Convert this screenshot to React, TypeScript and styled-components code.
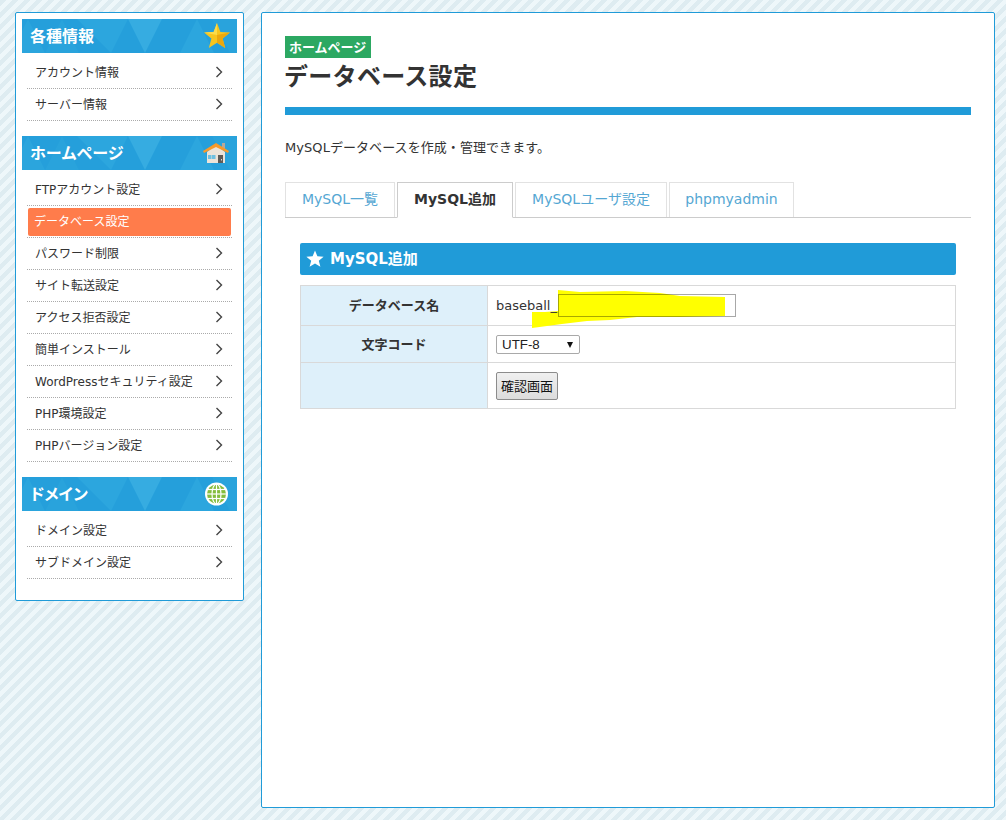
import React, { FC } from 'react'
import styled, { createGlobalStyle } from 'styled-components'

const fontStack = `"DejaVu Sans", "Noto Sans CJK JP", sans-serif`

const GlobalStyle = createGlobalStyle`
  html, body {
    margin : 0;
    padding : 0;
  }
  body {
    height : 820px;
    overflow : hidden;
    font-family : ${fontStack};
    color : #333;
    background : repeating-linear-gradient(
      135deg,
      #deecf1 0,
      #deecf1 4.25px,
      #eef7fa 4.25px,
      #eef7fa 8.5px
    );
  }
  * { box-sizing : border-box; }
`

const Page = styled.div`
  display : flex;
  align-items : flex-start;
  gap : 17px;
  padding : 12px 11px 0 15px;
  width : 1006px;
`

const Sidebar = styled.aside`
  width : 229px;
  height : 589px;
  flex : none;
  background : #fff;
  border : 1px solid #209bd8;
  border-radius : 2px;
  padding : 6px 6px 0;
`

const Group = styled.section`
  margin-bottom : 15px;
`

const GroupHead = styled.h2`
  position : relative;
  overflow : hidden;
  height : 34px;
  margin : 0;
  padding : 0 8px;
  background : #259fdb;
  color : #fff;
  font-size : 16px;
  font-weight : 700;
  line-height : 32px;
  font-family : "Noto Sans CJK JP", sans-serif;
`

const GroupTitle = styled.span<{ $spacing: number; $shift: number }>`
  position : relative;
  margin-left : ${p => p.$shift}px;
  letter-spacing : ${p => p.$spacing}px;
`

const HeadPattern = styled.svg`
  position : absolute;
  left : 0;
  top : 0;
`

const HeadIcon = styled.svg`
  position : absolute;
  right : 6px;
  top : 3px;
`

const MenuList = styled.ul`
  list-style : none;
  margin : 0;
  padding : 3px 5px 0;
`

const MenuItem = styled.li<{ $active?: boolean }>`
  display : flex;
  align-items : center;
  justify-content : space-between;
  height : 32px;
  padding : 0 9px 1px 8px;
  border-bottom : 1px dotted #aaa;
  font-size : 12px;
  font-family : ${fontStack};
  color : #333;

  span { padding-bottom : 2px; }

  &:first-child {
    height : 33px;
    span { padding-bottom : 0; }
  }

  ${p => p.$active && `
    position : relative;
    padding : 0 7px 1px;
    color : #fff;
    &::before {
      content : '';
      position : absolute;
      left : 1px;
      right : 1px;
      top : 2px;
      bottom : 1px;
      background : #ff7c4b;
      border-radius : 2px;
    }
    span { position : relative; }
  `}
`

const Chevron = styled.svg`
  flex : none;
`

const Main = styled.main`
  width : 734px;
  height : 796px;
  flex : none;
  background : #fff;
  border : 1px solid #209bd8;
  border-radius : 2px;
  padding : 23px 23px 0;
`

const Badge = styled.div`
  display : inline-block;
  height : 22px;
  padding : 0 5px 0 4px;
  background : #2ca862;
  color : #fff;
  font-size : 13px;
  font-weight : 700;
  line-height : 22px;
  font-family : "Noto Sans CJK JP", sans-serif;
`

const Title = styled.h1`
  margin : 0 0 0 -1px;
  height : 37px;
  font-size : 24px;
  font-weight : 700;
  line-height : 34px;
  letter-spacing : .3px;
  font-family : "Noto Sans CJK JP", sans-serif;
  color : #333;
`

const TitleBar = styled.div`
  height : 8px;
  margin-top : 12px;
  background : #209bd8;
`

const Lead = styled.p`
  margin : 24px 0 0;
  height : 20px;
  font-size : 13px;
  line-height : 18px;
  letter-spacing : .06px;
  color : #333;
`

const Tabs = styled.div`
  display : flex;
  gap : 2px;
  margin-top : 23px;
  height : 36px;
  border-bottom : 1px solid #ccc;
`

const Tab = styled.div<{ $active?: boolean; $width: number }>`
  width : ${p => p.$width}px;
  height : ${p => p.$active ? 36 : 35}px;
  border : ${p => p.$active ? '1px solid #ccc' : '1px solid #e2e2e2'};
  border-bottom : ${p => p.$active ? '1px solid #fff' : 'none'};
  background : #fff;
  color : ${p => p.$active ? '#333' : '#55a7d3'};
  font-size : 14px;
  font-weight : ${p => p.$active ? 700 : 400};
  line-height : 33px;
  text-align : center;
  white-space : nowrap;
`

const Panel = styled.div`
  margin : 25px 15px 0;
`

const PanelHead = styled.h3`
  display : flex;
  align-items : center;
  gap : 6px;
  height : 32px;
  margin : 0 0 10px;
  padding : 0 6px;
  background : #209bd8;
  border-radius : 2px;
  color : #fff;
  font-size : 15px;
  font-weight : 700;
`

const PanelTitle = styled.span`
  padding-bottom : 4px;
`

const FormTable = styled.table`
  width : 100%;
  border-collapse : collapse;
  font-size : 13px;
`

const Th = styled.th<{ $height: number }>`
  width : 187px;
  height : ${p => p.$height}px;
  padding : 0 0 2px;
  background : #def0fa;
  border : 1px solid #d9d9d9;
  font-size : 13px;
  font-weight : 700;
  font-family : "Noto Sans CJK JP", sans-serif;
  color : #333;
  text-align : center;
`

const Td = styled.td`
  padding : 0 8px;
  border : 1px solid #d9d9d9;
  color : #333;
`

const FieldLine = styled.div`
  position : relative;
  display : flex;
  align-items : center;
`

const Prefix = styled.span`
  position : relative;
  z-index : 1;
`

// translucent border and no fill, so the marker stroke shows through like the screenshot
const TextBox = styled.input`
  position : relative;
  z-index : 1;
  width : 178px;
  height : 23px;
  margin : 0 0 0 1px;
  padding : 0 2px;
  border : 1px solid rgba(0, 0, 0, .34);
  background : transparent;
`

const Scribble = styled.svg`
  position : absolute;
  left : 36px;
  top : -4px;
  pointer-events : none;
`

const SelectBox = styled.div`
  position : relative;
  width : 84px;
  height : 19px;
  padding-left : 5px;
  border : 1px solid #a9a9a9;
  border-radius : 2px;
  background : #fff;
  color : #222;
  font-family : "Liberation Sans", sans-serif;
  font-size : 13.33px;
  line-height : 17px;

  &::after {
    content : '';
    position : absolute;
    right : 6px;
    top : 6px;
    border-left : 3.5px solid transparent;
    border-right : 3.5px solid transparent;
    border-top : 6px solid #111;
  }
`

const SubmitButton = styled.button`
  display : block;
  width : 62px;
  height : 28px;
  padding : 0;
  border : 1px solid #8c8c8c;
  border-radius : 2px;
  background : linear-gradient(#f0f0f0, #dcdcdc);
  color : #111;
  font-family : "Noto Sans CJK JP", sans-serif;
  font-size : 13px;
`

const Star: FC = () => (
  <HeadIcon width="28" height="28" viewBox="0 0 28 28">
    <polygon points="14,1 17.4,10 27,10.5 19.6,16.6 22.2,26 14,20.8 5.8,26 8.4,16.6 1,10.5 10.6,10" fill="#f7c51e" />
    <polygon points="14,13 27,10.5 19.6,16.6 22.2,26 14,20.8" fill="#eba80f" />
    <polygon points="14,1 10.6,10 1,10.5 14,13" fill="#fbdb4a" />
  </HeadIcon>
)

const House: FC = () => (
  <HeadIcon width="28" height="28" viewBox="-1 0 28 28">
    <rect x="18" y="4" width="3" height="7" fill="#b8a89a" />
    <polygon points="3,13 12,6 21,13 21,24 3,24" fill="#ece3d8" />
    <polygon points="-1,12 12,4 25,12 24,14 12,8 0,14" fill="#f79a2b" />
    <rect x="4" y="16" width="3.5" height="4" fill="#6fc0e0" />
    <rect x="8" y="16" width="3.5" height="4" fill="#6fc0e0" />
    <rect x="14" y="16" width="5" height="8" fill="#5e5a56" />
    <rect x="17" y="20" width="1" height="1.5" fill="#ddd" />
  </HeadIcon>
)

const Globe: FC = () => (
  <HeadIcon width="28" height="28" viewBox="0 0 28 28">
    <circle cx="13.5" cy="14" r="11.5" fill="#fff" />
    <circle cx="13.5" cy="14" r="9.5" fill="#85bd3d" />
    <ellipse cx="13.5" cy="14" rx="4.5" ry="10" fill="none" stroke="#fff" strokeWidth="1.2" />
    <line x1="13.5" y1="4" x2="13.5" y2="24" stroke="#fff" strokeWidth="1.2" />
    <line x1="4" y1="14" x2="23" y2="14" stroke="#fff" strokeWidth="1.2" />
    <line x1="5" y1="9.5" x2="22" y2="9.5" stroke="#fff" strokeWidth="1.2" />
    <line x1="5" y1="18.5" x2="22" y2="18.5" stroke="#fff" strokeWidth="1.2" />
  </HeadIcon>
)

const Pattern: FC = () => (
  <HeadPattern width="215" height="34" viewBox="0 0 215 34">
    <polygon points="-11,34 6,0 23,34" fill="#2ba5dd" />
    <polygon points="23,34 40,0 57,34" fill="#29a3dc" />
    <polygon points="55,0 106,0 89,34" fill="#2ca6de" />
    <polygon points="106,0 140,0 123,34" fill="#36ace1" />
    <polygon points="158,34 175,0 192,34" fill="#2ca6de" />
    <polygon points="190,0 215,0 215,34 208,34" fill="#29a3dc" />
  </HeadPattern>
)

const Arrow: FC = () => (
  <Chevron width="8" height="12" viewBox="0 0 8 12">
    <path d="M1.5 1 L6.5 6 L1.5 11" fill="none" stroke="#444" strokeWidth="1.4" />
  </Chevron>
)

type Entry = { label: string; active?: boolean }

const groups: { title: string; icon: FC; spacing: number; shift: number; items: Entry[] }[] = [
  {
    title: '各種情報',
    icon: Star,
    spacing: 0,
    shift: 0,
    items: [ { label: 'アカウント情報' }, { label: 'サーバー情報' } ],
  },
  {
    title: 'ホームページ',
    icon: House,
    spacing: -.3,
    shift: 0,
    items: [
      { label: 'FTPアカウント設定' },
      { label: 'データベース設定', active: true },
      { label: 'パスワード制限' },
      { label: 'サイト転送設定' },
      { label: 'アクセス拒否設定' },
      { label: '簡単インストール' },
      { label: 'WordPressセキュリティ設定' },
      { label: 'PHP環境設定' },
      { label: 'PHPバージョン設定' },
    ],
  },
  {
    title: 'ドメイン',
    icon: Globe,
    spacing: -1.5,
    shift: -1,
    items: [ { label: 'ドメイン設定' }, { label: 'サブドメイン設定' } ],
  },
]

const tabs = [
  { label: 'MySQL一覧', width: 110 },
  { label: 'MySQL追加', width: 116, active: true },
  { label: 'MySQLユーザ設定', width: 152 },
  { label: 'phpmyadmin', width: 125 },
]

const App: FC = () => (
  <>
    <GlobalStyle />
    <Page>
      <Sidebar>
        {groups.map( group => (
          <Group key={group.title}>
            <GroupHead>
              <Pattern />
              <GroupTitle $spacing={group.spacing} $shift={group.shift}>{group.title}</GroupTitle>
              <group.icon />
            </GroupHead>
            <MenuList>
              {group.items.map( item => (
                <MenuItem key={item.label} $active={item.active}>
                  <span>{item.label}</span>
                  {!item.active && <Arrow />}
                </MenuItem>
              ) )}
            </MenuList>
          </Group>
        ) )}
      </Sidebar>

      <Main>
        <Badge>ホームページ</Badge>
        <Title>データベース設定</Title>
        <TitleBar />
        <Lead>MySQLデータベースを作成・管理できます。</Lead>

        <Tabs>
          {tabs.map( tab => (
            <Tab key={tab.label} $active={tab.active} $width={tab.width}>{tab.label}</Tab>
          ) )}
        </Tabs>

        <Panel>
          <PanelHead>
            <svg width="18" height="18" viewBox="0 0 18 18">
              <polygon points="9,0.5 11.4,6.3 17.6,6.7 12.8,10.7 14.4,16.8 9,13.4 3.6,16.8 5.2,10.7 0.4,6.7 6.6,6.3" fill="#fff" />
            </svg>
            <PanelTitle>MySQL追加</PanelTitle>
          </PanelHead>
          <FormTable>
            <tbody>
              <tr>
                <Th $height={40}>データベース名</Th>
                <Td>
                  <FieldLine>
                    <Scribble width="194" height="40" viewBox="0 0 194 40">
                      <polygon points="26,0 48,2 93,1 128,3 148,6 193,7 193,26 148,27 105,27 78,30 55,31 30,34 0,38 0,22 13,22 26,21" fill="#ffff00" />
                    </Scribble>
                    <Prefix>baseball_</Prefix>
                    <TextBox type="text" />
                  </FieldLine>
                </Td>
              </tr>
              <tr>
                <Th $height={37}>文字コード</Th>
                <Td><SelectBox>UTF-8</SelectBox></Td>
              </tr>
              <tr>
                <Th $height={46} />
                <Td><SubmitButton>確認画面</SubmitButton></Td>
              </tr>
            </tbody>
          </FormTable>
        </Panel>
      </Main>
    </Page>
  </>
)

export default App
